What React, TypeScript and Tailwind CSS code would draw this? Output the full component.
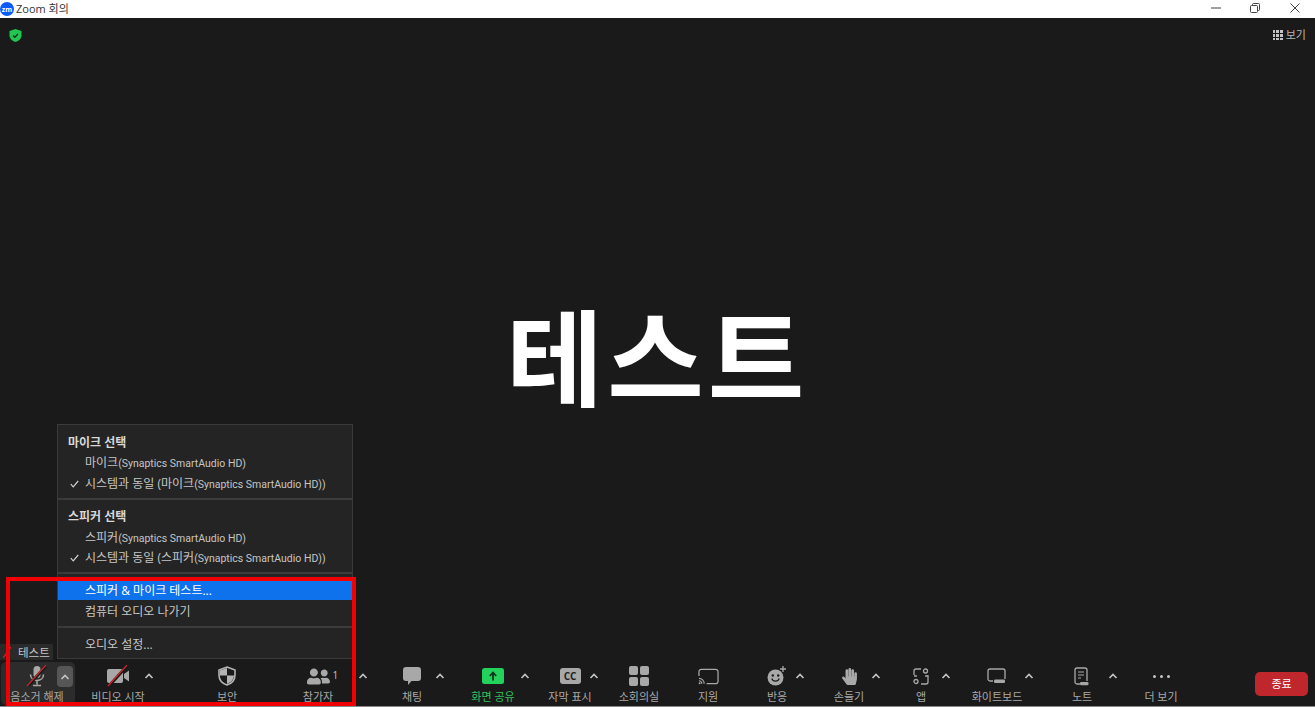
import type { ReactNode } from "react";
import { FaHandPaper, FaUserFriends } from "react-icons/fa";

const font = "font-['Open_Sans','Noto_Sans_CJK_KR',sans-serif]";

const Caret = ({ className = "" }: { className?: string }) => (
  <svg width="10" height="6" viewBox="0 0 10 6" className={className}>
    <path d="M1.5 5 5 1.5 8.5 5" fill="none" stroke="#c4c4c4" strokeWidth="1.6" />
  </svg>
);

const MicIcon = ({ size = 22 }: { size?: number }) => (
  <svg width={size} height={size} viewBox="0 0 22 22">
    <rect x="7.5" y="1" width="7" height="12" rx="3.5" fill="#a8a8a8" />
    <path d="M4.5 9.5c0 8 13 8 13 0M11 16v3.5M7 20.5h8" fill="none" stroke="#a8a8a8" strokeWidth="1.6" />
    <path d="M2 21 20 1" stroke="#1a1a1a" strokeWidth="3" />
    <path d="M1 21 20 0" stroke="#c9282d" strokeWidth="1.3" />
  </svg>
);

const VideoIcon = () => (
  <svg width="24" height="22" viewBox="0 0 24 22">
    <rect x="1" y="4" width="16" height="14" rx="2" fill="#a8a8a8" />
    <path d="M18 9 23 5.500v11L18 13z" fill="#a8a8a8" />
    <path d="M3 21 21 1" stroke="#1a1a1a" strokeWidth="3" />
    <path d="M2 21 21 0" stroke="#c9282d" strokeWidth="1.3" />
  </svg>
);

const ShieldHalf = () => (
  <svg width="20" height="20" viewBox="0 0 20 20">
    <path d="M10 1 18 4v5c0 5-3.500 8.500-8 10-4.500-1.500-8-5-8-10V4z" fill="#1a1a1a" stroke="#b4b4b4" strokeWidth="1.6" />
    <path d="M10 2v7.500H3V4.500zM10 9.500h7c-.3 4-3 7-7 8.500z" fill="#b4b4b4" />
  </svg>
);

const ChatIcon = () => (
  <svg width="20" height="20" viewBox="0 0 20 20">
    <path d="M4 1h12a3 3 0 0 1 3 3v8a3 3 0 0 1-3 3H9.500L6 19v-4H4a3 3 0 0 1-3-3V4a3 3 0 0 1 3-3z" fill="#a8a8a8" />
  </svg>
);

const ShareIcon = () => (
  <svg width="22" height="16" viewBox="0 0 22 16">
    <rect width="22" height="16" rx="2.500" fill="#22d25c" />
    <path d="M11 12.500V5M7.800 8 11 4.500 14.200 8" fill="none" stroke="#10331c" strokeWidth="1.800" />
  </svg>
);

const CcIcon = () => (
  <div className="flex h-[16px] w-[21px] items-center justify-center rounded-[3px] bg-[#a8a8a8] text-[10px] font-bold leading-none text-[#222]">
    CC
  </div>
);

const RoomsIcon = () => (
  <div className="grid h-[20px] w-[20px] grid-cols-2 gap-[2px]">
    <span className="rounded-[2px] bg-[#a8a8a8]" />
    <span className="rounded-[2px] bg-[#a8a8a8]" />
    <span className="rounded-[2px] bg-[#a8a8a8]" />
    <span className="rounded-[2px] bg-[#a8a8a8]" />
  </div>
);

const CastIcon = () => (
  <svg width="21" height="17" viewBox="0 0 22 17" fill="none" stroke="#a8a8a8">
    <path d="M1 8V3.500A2.500 2.500 0 0 1 3.500 1h15A2.500 2.500 0 0 1 21 3.500v10a2.500 2.500 0 0 1-2.500 2.500H9" strokeWidth="1.300" />
    <path d="M1 10.500a5.500 5.500 0 0 1 5.500 5.500M1 13a3 3 0 0 1 3 3" strokeWidth="1.200" />
    <circle cx="1.700" cy="15.500" r="1" fill="#a8a8a8" stroke="none" />
  </svg>
);

const SmileIcon = () => (
  <svg width="20" height="20" viewBox="0 0 20 20">
    <circle cx="8.500" cy="11.500" r="8" fill="#a8a8a8" />
    <circle cx="5.800" cy="9.500" r="1.200" fill="#1a1a1a" />
    <circle cx="11.200" cy="9.500" r="1.200" fill="#1a1a1a" />
    <path d="M4.800 12.500c1 3.500 6.400 3.500 7.400 0" fill="none" stroke="#1a1a1a" strokeWidth="1.200" />
    <path d="M16 0v6M13 3h6" stroke="#a8a8a8" strokeWidth="1.300" />
  </svg>
);

const AppsIcon = () => (
  <svg width="16" height="17" viewBox="0 0 16 17" fill="none" stroke="#a8a8a8" strokeWidth="1.300">
    <path d="M1 7V3a2 2 0 0 1 2-2h5M15 7v7a2 2 0 0 1-2 2H8" />
    <circle cx="12.500" cy="3" r="2" />
    <circle cx="3" cy="13.500" r="2" />
    <path d="M1 8h3M12 8h3" />
  </svg>
);

const BoardIcon = () => (
  <svg width="20" height="17" viewBox="0 0 20 17" fill="none">
    <path d="M6 13H3a2 2 0 0 1-2-2V3a2 2 0 0 1 2-2h13a2 2 0 0 1 2 2v8" stroke="#a8a8a8" strokeWidth="1.300" />
    <rect x="7" y="11.500" width="11" height="3.500" rx="1.200" fill="#a8a8a8" />
  </svg>
);

const NotesIcon = () => (
  <svg width="16" height="19" viewBox="0 0 16 19" fill="none" stroke="#a8a8a8">
    <path d="M6 17H3a2 2 0 0 1-2-2V3a2 2 0 0 1 2-2h8a2 2 0 0 1 2 2v11" strokeWidth="1.300" />
    <path d="M4 5h6M4 8h6M4 11h3" strokeWidth="1.100" />
    <rect x="6" y="15" width="8.500" height="3.200" rx="1.300" fill="#a8a8a8" stroke="none" />
  </svg>
);

const DotsIcon = () => (
  <div className="flex gap-[4px]">
    <span className="h-[3px] w-[3px] rounded-full bg-[#c4c4c4]" />
    <span className="h-[3px] w-[3px] rounded-full bg-[#c4c4c4]" />
    <span className="h-[3px] w-[3px] rounded-full bg-[#c4c4c4]" />
  </div>
);

type Tool = { label: string; cell: string; icon: ReactNode; caret?: string; labelColor?: string };

const tools: Tool[] = [
  { label: "비디오 시작", cell: "ml-[18px] w-[52px]", icon: <VideoIcon />, caret: "ml-0" },
  { label: "보안", cell: "ml-[53px] w-[40px]", icon: <ShieldHalf /> },
  {
    label: "참가자",
    cell: "ml-[47px] w-[48px]",
    icon: (
      <div className="relative">
        <FaUserFriends size={23} color="#a8a8a8" />
        <span className="absolute left-[26px] top-[5px] text-[10px] leading-none text-[#c4c4c4]">1</span>
      </div>
    ),
    caret: "ml-[16px]",
  },
  { label: "채팅", cell: "ml-[28px] w-[32px]", icon: <ChatIcon />, caret: "ml-[7px]" },
  { label: "화면 공유", cell: "ml-[25px] w-[46px]", icon: <ShareIcon />, caret: "ml-[4px]", labelColor: "text-[#2fc25f]" },
  { label: "자막 표시", cell: "ml-[21px] w-[38px]", icon: <CcIcon />, caret: "ml-0" },
  { label: "소회의실", cell: "ml-[18px] w-[44px]", icon: <RoomsIcon /> },
  { label: "지원", cell: "ml-[27px] w-[40px]", icon: <CastIcon /> },
  { label: "반응", cell: "ml-[31px] w-[36px]", icon: <SmileIcon />, caret: "ml-0" },
  { label: "손들기", cell: "ml-[24px] w-[40px]", icon: <FaHandPaper size={17} color="#a8a8a8" />, caret: "ml-[2px]" },
  { label: "앱", cell: "ml-[28px] w-[24px]", icon: <AppsIcon />, caret: "ml-[8px]" },
  { label: "화이트보드", cell: "ml-[19px] w-[54px]", icon: <BoardIcon />, caret: "ml-0" },
  { label: "노트", cell: "ml-[32px] w-[32px]", icon: <NotesIcon />, caret: "ml-[10px]" },
  { label: "더 보기", cell: "ml-[23px] w-[40px]", icon: <DotsIcon /> },
];

const ToolCell = ({ tool }: { tool: Tool }) => (
  <>
    <div className={`flex shrink-0 flex-col items-center ${tool.cell}`}>
      <div className="flex h-[22px] items-center justify-center">{tool.icon}</div>
      <span className={`mt-[3px] whitespace-nowrap text-[11px] leading-[14px] ${tool.labelColor ?? "text-[#a9a9a9]"}`}>
        {tool.label}
      </span>
    </div>
    {tool.caret && (
      <div className={`flex h-[22px] w-[10px] shrink-0 items-center justify-center ${tool.caret}`}>
        <Caret />
      </div>
    )}
  </>
);

const MenuItem = ({
  text,
  latin,
  checked,
  active,
}: {
  text: string;
  latin?: string;
  checked?: boolean;
  active?: boolean;
}) => (
  <div className={`flex h-[20px] items-center pl-[12px] pt-[2px] text-[12px] ${active ? "bg-[#0e72ed] text-white" : "text-[#c6c6c6]"}`}>
    <span className="w-[15px] shrink-0 text-[10px] leading-none">
      {checked && (
        <svg width="9" height="8" viewBox="0 0 9 8">
          <path d="M.8 4.200 3.200 6.800 8.200 1" fill="none" stroke="#d0d0d0" strokeWidth="1.200" />
        </svg>
      )}
    </span>
    <span className="whitespace-nowrap">
      {text}
      {latin && <span className="font-['Roboto','Noto_Sans_CJK_KR',sans-serif] text-[10.5px]">{latin}</span>}
    </span>
  </div>
);

const MenuTitle = ({ text }: { text: string }) => (
  <div className="flex h-[20px] items-center pl-[10px] pt-[2px] text-[12px] font-bold text-[#d8d8d8]">{text}</div>
);

const Divider = () => <div className="h-[2px] bg-[#3b3b3b]" />;

export default function App() {
  return (
    <div className={`relative flex h-[707px] w-[1315px] flex-col overflow-hidden bg-[#1a1a1a] ${font}`}>
      <header className="flex h-[18px] shrink-0 items-center bg-white text-black">
        <div className="flex h-[14px] w-[14px] items-center justify-center rounded-full bg-[#0b5cff] text-[7px] font-bold leading-none text-white">
          zm
        </div>
        <span className="ml-[2px] text-[11px] text-[#333]">Zoom 회의</span>
        <div className="mb-[2px] ml-auto flex items-center">
          <svg width="10" height="10" viewBox="0 0 10 10" className="mr-[29px]">
            <path d="M0 5h10" stroke="#444" />
          </svg>
          <svg width="10" height="10" viewBox="0 0 10 10" className="mr-[30px]" fill="none" stroke="#444">
            <rect x=".5" y="2.500" width="7" height="7" rx="1" />
            <path d="M2.500 2.500V1.500a1 1 0 0 1 1-1h5a1 1 0 0 1 1 1v5a1 1 0 0 1-1 1h-1" />
          </svg>
          <svg width="10" height="10" viewBox="0 0 10 10" className="mr-[15px]" fill="none" stroke="#444">
            <path d="M.5.500l9 9M9.500.500l-9 9" />
          </svg>
        </div>
      </header>

      <main className="relative flex flex-1 items-center justify-center pt-[36px]">
        <div className="absolute left-[9px] top-[11px]">
          <svg width="13" height="13" viewBox="0 0 13 13">
            <path d="M6.500 0 12.500 2v4.500c0 3-2.500 5.300-6 6.500-3.500-1.200-6-3.500-6-6.500V2z" fill="#23c552" />
            <path d="M4 6.500 5.800 8.300 9 5" fill="none" stroke="#0b3318" strokeWidth="1.300" />
          </svg>
        </div>
        <div className="absolute right-[9px] top-[9px] flex items-center gap-[3px] text-[11px] text-[#b5b5b5]">
          <div className="grid h-[10px] w-[10px] grid-cols-3 gap-[1px]">
            {Array.from({ length: 9 }).map((_, i) => (
              <span key={i} className="bg-[#c4c4c4]" />
            ))}
          </div>
          보기
        </div>
        <div className="whitespace-nowrap text-[105px] font-bold leading-none tracking-[4px] text-white">테스트</div>

        <div className="absolute left-[57px] top-[406px] w-[296px] border border-[#3b3b3b] bg-[#242424] pb-[4px] pt-[7px]">
          <MenuTitle text="마이크 선택" />
          <MenuItem text="마이크" latin="(Synaptics SmartAudio HD)" />
          <div className="mb-[5px] mt-[1px]">
            <MenuItem text="시스템과 동일 (마이크" latin="(Synaptics SmartAudio HD))" checked />
          </div>
          <Divider />
          <div className="mt-[6px]">
            <MenuTitle text="스피커 선택" />
          </div>
          <div className="mt-[1px]">
            <MenuItem text="스피커" latin="(Synaptics SmartAudio HD)" />
          </div>
          <div className="mb-[5px]">
            <MenuItem text="시스템과 동일 (스피커" latin="(Synaptics SmartAudio HD))" checked />
          </div>
          <Divider />
          <div className="mt-[6px]">
            <MenuItem text="스피커 & 마이크 테스트..." active />
          </div>
          <div className="mb-[5px] mt-[1px]">
            <MenuItem text="컴퓨터 오디오 나가기" />
          </div>
          <Divider />
          <div className="mt-[6px]">
            <MenuItem text="오디오 설정..." />
          </div>
        </div>

        <div className="absolute bottom-0 left-0 flex h-[16px] w-[53px] items-center bg-[#2a2a2a] pl-[3px] text-[11.5px] text-[#c6c6c6]">
          <svg width="8" height="11" viewBox="0 0 8 11" className="mr-[7px]">
            <path d="M0 11 8 0" stroke="#d0282d" strokeWidth="1.200" />
          </svg>
          <span className="pt-[1px]">테스트</span>
        </div>
      </main>

      <footer className="flex h-[47px] shrink-0 items-start border-b border-[#8a8a8a] pt-[2px]">
        <div className="relative ml-[1px] flex h-[43px] w-[74px] shrink-0 flex-col items-center rounded-[5px] bg-[#2c2c2c] pt-[3px]">
          <div className="flex h-[22px] items-center justify-center pr-[2px]">
            <MicIcon />
          </div>
          <span className="mt-[3px] whitespace-nowrap pr-[2px] text-[11px] leading-[14px] text-[#a9a9a9]">음소거 해제</span>
          <div className="absolute left-[56px] top-[4px] flex h-[21px] w-[16px] items-center justify-center rounded-[4px] bg-[#565656]">
            <Caret />
          </div>
        </div>
        <div className="-ml-[1px] flex items-start pt-[3px]">
          {tools.map((tool) => (
            <ToolCell key={tool.label} tool={tool} />
          ))}
        </div>
        <div className="ml-auto mr-[7px] mt-[10px] flex h-[24px] w-[53px] items-center justify-center rounded-[5px] bg-[#c0272d] text-[11px] text-white">
          종료
        </div>
      </footer>

      <div className="pointer-events-none absolute left-[6px] top-[577px] h-[129px] w-[350px] border-[4px] border-[#f00000]" />
    </div>
  );
}
